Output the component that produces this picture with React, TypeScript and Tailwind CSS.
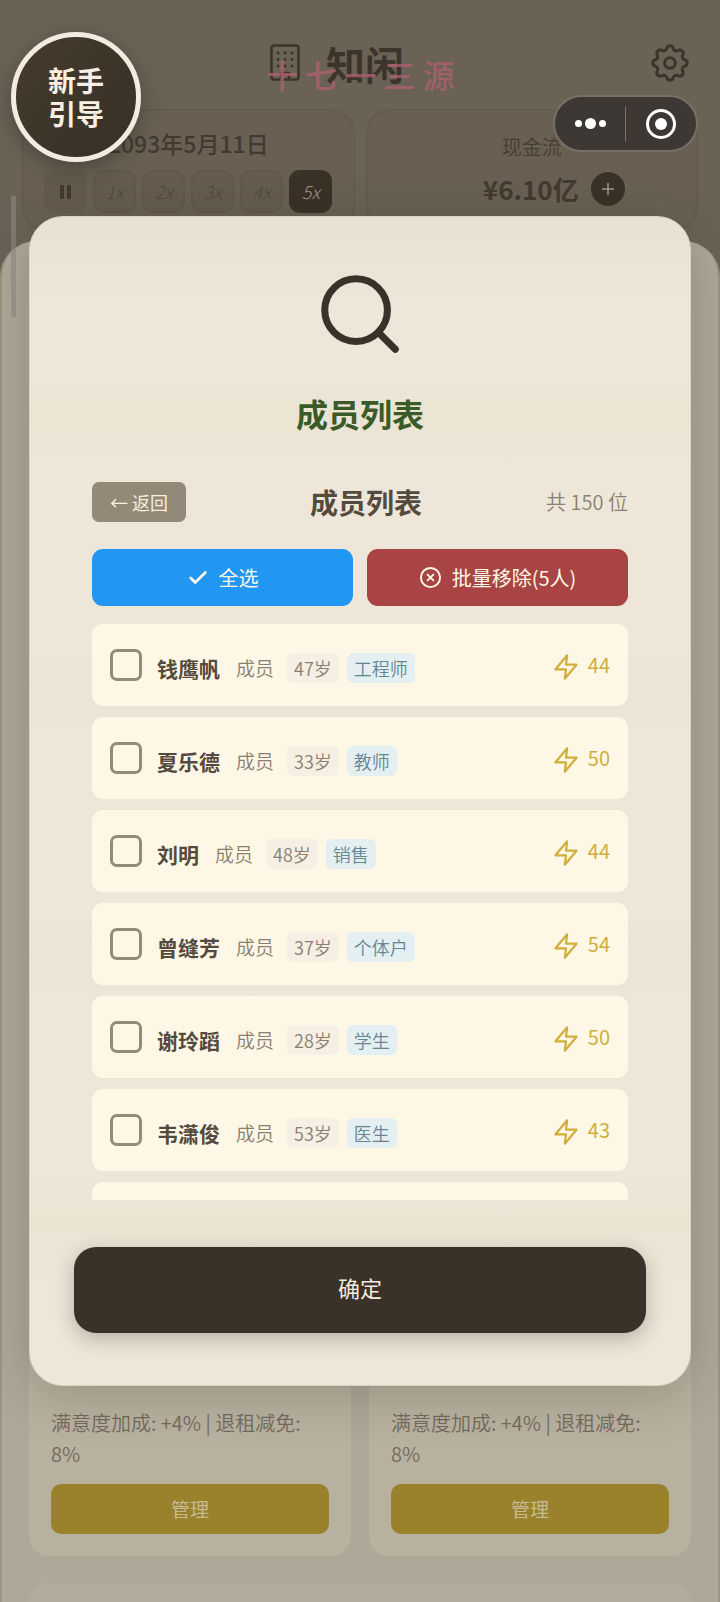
import { Check, CircleX, Search } from "lucide-react";

const members = [
  { name: "钱鹰帆", age: 47, job: "工程师", energy: 44 },
  { name: "夏乐德", age: 33, job: "教师", energy: 50 },
  { name: "刘明", age: 48, job: "销售", energy: 44 },
  { name: "曾缝芳", age: 37, job: "个体户", energy: 54 },
  { name: "谢玲蹈", age: 28, job: "学生", energy: 50 },
  { name: "韦潇俊", age: 53, job: "医生", energy: 43 },
];

const speeds = ["1x", "2x", "3x", "4x", "5x"];

function BuildingIcon() {
  return (
    <svg viewBox="0 0 30 38" className="w-[30px] h-[38px]" fill="none" stroke="currentColor" strokeWidth="2.6">
      <rect x="1.5" y="1.5" width="27" height="34" rx="2.5" />
      <path d="M8 9h.1M15 9h.1M22 9h.1M8 15.500h.1M15 15.500h.1M22 15.500h.1M8 22h.1M15 22h.1M22 22h.1" strokeWidth="2.8" strokeLinecap="round" />
      <path d="M11 35v-6h8v6" />
    </svg>
  );
}

function GearIcon() {
  return (
    <svg viewBox="2 2 20 20" className="size-[38px]" fill="none" stroke="currentColor" strokeWidth="1.600" strokeLinejoin="round">
      <circle cx="12" cy="12" r="2.800" />
      <path d="M10.300 4.300c.4-1.800 3-1.800 3.400 0a1.700 1.700 0 0 0 2.600 1.100c1.500-.9 3.300.9 2.400 2.400a1.700 1.700 0 0 0 1 2.500c1.800.4 1.800 3 0 3.400a1.700 1.700 0 0 0-1 2.600c.9 1.500-.9 3.300-2.400 2.400a1.700 1.700 0 0 0-2.600 1c-.4 1.800-3 1.800-3.400 0a1.700 1.700 0 0 0-2.600-1c-1.500.9-3.300-.9-2.400-2.400a1.700 1.700 0 0 0-1-2.600c-1.800-.4-1.800-3 0-3.400a1.700 1.700 0 0 0 1-2.500c-.9-1.500.9-3.300 2.400-2.400 1 .6 2.300.1 2.600-1.100z" />
    </svg>
  );
}

function ZapIcon() {
  return (
    <svg viewBox="0 0 24 24" className="size-7" fill="none" stroke="currentColor" strokeWidth="1.900" strokeLinejoin="round" strokeLinecap="round">
      <path d="M13 2 3 14h9l-1 8 10-12h-9z" />
    </svg>
  );
}

function Header() {
  return (
    <header>
      <div className="relative h-[109px] pt-[17px] pl-[270px] pr-[31px] flex items-center justify-between text-[#3c342a]">
        <div className="flex items-center gap-[26px]">
          <BuildingIcon />
          <h1 className="text-[39px] leading-[48px] font-bold">知闲</h1>
        </div>
        <button type="button" aria-label="设置">
          <GearIcon />
        </button>
        <p className="absolute left-[266px] top-[50px] text-[32px] leading-[48px] font-medium text-[#b0606d]/80">十 七 一 三 源</p>
      </div>
      <div className="grid grid-cols-2 gap-[11px] px-[22px]">
        <section className="h-[122px] rounded-[24px] border-2 border-[#635b4e] bg-[#696053] flex flex-col items-center">
          <p className="mt-[16px] text-[23px] leading-[32px] font-medium text-[#423a2f]">2093年5月11日</p>
          <div className="mt-[11px] flex gap-[6px]">
            <button type="button" aria-label="暂停" className="size-[43px] rounded-[11px] bg-[#645b4e] flex items-center justify-center gap-[3px]">
              <span className="w-1 h-[14px] bg-[#423a2f]" />
              <span className="w-1 h-[14px] bg-[#423a2f]" />
            </button>
            {speeds.map((speed) => (
              <button
                key={speed}
                type="button"
                className={
                  speed === "5x"
                    ? "size-[43px] rounded-[11px] bg-[#3a3127] text-[18px] italic font-light text-[#a1988a]"
                    : "size-[43px] rounded-[11px] border-2 border-[#61594b] bg-[#655c4f] text-[18px] italic font-light text-[#50483c]"
                }
              >
                {speed}
              </button>
            ))}
          </div>
        </section>
        <section className="h-[122px] rounded-[24px] border-2 border-[#635b4e] bg-[#696053] flex flex-col items-center">
          <p className="mt-[21px] text-[20px] leading-[30px] font-[350] text-[#453d32]">现金流</p>
          <div className="mt-[8px] ml-[44px] flex items-center gap-[12px]">
            <span className="text-[26px] leading-[38px] font-bold text-[#423a2f]">¥6.10亿</span>
            <button type="button" aria-label="增加现金" className="size-[34px] rounded-full bg-[#3a3127] text-[#a1988a] flex items-center justify-center">
              <svg viewBox="0 0 14 14" className="size-[14px]" stroke="currentColor" strokeWidth="1.500">
                <path d="M7 1v12M1 7h12" />
              </svg>
            </button>
          </div>
        </section>
      </div>
    </header>
  );
}

function PropertyCard() {
  return (
    <section className="h-[420px] rounded-[20px] bg-[#b9b1a0] px-[22px] pb-[22px] flex flex-col justify-end">
      <p className="text-[20px] leading-[31px] font-[350] text-[#736a5c]">满意度加成: +4% | 退租减免: 8%</p>
      <button type="button" className="mt-[15px] h-[50px] rounded-[10px] bg-[#9a822d] text-[19px] text-[#c7bb93]">
        管理
      </button>
    </section>
  );
}

function MemberRow({ member }: { member: (typeof members)[number] }) {
  return (
    <li className="h-[82px] shrink-0 rounded-[11px] bg-[#fff7e6] px-[18px] flex items-center">
      <label className="flex items-center">
        <input
          type="checkbox"
          className="appearance-none size-8 mr-[15px] rounded-[7px] border-[3px] border-[#948a78] checked:bg-[#948a78]"
        />
        <span className="mt-[5px] flex items-center">
          <span className="text-[21px] leading-[30px] font-bold text-[#544b3e]">{member.name}</span>
          <span className="ml-[16px] text-[19px] leading-[30px] font-[350] text-[#8a8070]">成员</span>
          <span className="ml-[13px] rounded-[6px] bg-[#f5efe4] px-[7px] text-[18px] leading-[30px] font-[350] text-[#8a8070]">{member.age}岁</span>
          <span className="ml-2 rounded-[6px] bg-[#e4eff2] px-[7px] text-[18px] leading-[30px] font-[350] text-[#668592]">{member.job}</span>
        </span>
      </label>
      <span className="ml-auto flex items-center gap-2 text-[20px] leading-[30px] text-[#cfae3b]">
        <span className="mt-[4px]">
          <ZapIcon />
        </span>
        {member.energy}
      </span>
    </li>
  );
}

function MemberDialog() {
  return (
    <div
      role="dialog"
      aria-label="成员列表"
      className="w-full rounded-[34px] border border-[#dbd2c0] bg-[linear-gradient(#e8e0d3,#ede6d9_8%,#ede6d9_14%,#ebe4d2_17%,#ede6d9_21%,#ede6d9_37%,#ebe3d4_40%,#ede6d9_44%,#ede6d9_60%,#ebe3d4_63%,#ede6d9_67%,#ede6d9_82%,#ebe3d2_86%,#ede6d9_91%)] px-[44px] pt-[50px] pb-[52px] shadow-[0_10px_50px_rgba(40,32,22,0.22)]"
    >
      <Search className="mx-auto size-[94px] text-[#3a3129]" strokeWidth={1.8} />
      <h2 className="mt-[28px] text-center text-[32px] leading-[48px] font-bold text-[#3c5a28]">成员列表</h2>

      <div className="px-[18px]">
        <div className="mt-[45px] flex items-center justify-between">
          <button type="button" className="w-[94px] h-10 rounded-[7px] bg-[#938978] text-[18px] text-[#f6efdf]">
            ← 返回
          </button>
          <h3 className="text-[28px] leading-[40px] font-bold text-[#544b3e]">成员列表</h3>
          <p className="text-[20px] leading-[30px] font-[350] text-[#8a8070]">共 150 位</p>
        </div>

        <div className="mt-[27px] grid grid-cols-2 gap-[14px]">
          <button type="button" className="h-[57px] rounded-[11px] bg-[#2196f3] text-[20px] text-[#fff7e6] flex items-center justify-center gap-[10px]">
            <Check className="size-[22px]" strokeWidth={3} />
            全选
          </button>
          <button type="button" className="h-[57px] rounded-[11px] bg-[#a84444] text-[20px] text-[#fff7e6] flex items-center justify-center gap-[10px]">
            <CircleX className="size-[23px]" />
            批量移除(5人)
          </button>
        </div>

        <ul className="mt-[18px] h-[576px] overflow-hidden flex flex-col gap-[11px]">
          {members.map((member) => (
            <MemberRow key={member.name} member={member} />
          ))}
          <li className="h-[82px] shrink-0 rounded-[11px] bg-[#fff7e6]" />
        </ul>
      </div>

      <button
        type="button"
        className="mt-[47px] w-full h-[86px] pb-[6px] rounded-[22px] bg-[#3a3129] text-[22px] text-[#f3ebdd] shadow-[0_6px_20px_rgba(58,49,41,0.3)]"
      >
        确定
      </button>
    </div>
  );
}

function Capsule() {
  return (
    <div className="absolute right-[22px] top-[95px] w-[145px] h-[57px] rounded-full border-2 border-[#777067] bg-[#3d3834] flex items-center text-white">
      <button type="button" aria-label="更多" className="flex-1 flex items-center justify-center gap-[3px]">
        <span className="size-[7px] rounded-full bg-white" />
        <span className="size-[11px] rounded-full bg-white" />
        <span className="size-[7px] rounded-full bg-white" />
      </button>
      <span className="w-px h-9 bg-[#777067]" />
      <button type="button" aria-label="关闭" className="flex-1 flex items-center justify-center">
        <svg viewBox="0 0 30 30" className="size-[30px]">
          <circle cx="15" cy="15" r="13.500" fill="none" stroke="currentColor" strokeWidth="3" />
          <circle cx="15" cy="15" r="6" fill="currentColor" />
        </svg>
      </button>
    </div>
  );
}

export default function App() {
  return (
    <div className="relative h-screen overflow-hidden bg-[#6b6256] flex flex-col font-['Noto_Sans_CJK_SC','Noto_Sans',sans-serif]">
      <Header />
      <main className="mt-[10px] flex-1 rounded-t-[36px] border-x-2 border-[#9d9485] bg-[#afa798] px-[27px] flex flex-col justify-end">
        <div className="grid grid-cols-2 gap-[18px]">
          <PropertyCard />
          <PropertyCard />
        </div>
        <div className="mt-[27px] h-[19px] rounded-t-[20px] bg-[#b3ac9e]" />
      </main>

      <div className="absolute left-[11px] top-[196px] w-[5px] h-[121px] bg-[#8d8b87]/60" />

      <div className="absolute inset-0 px-[29px] flex items-center">
        <MemberDialog />
      </div>

      <Capsule />
      <button
        type="button"
        className="absolute left-[11px] top-[32px] size-[130px] rounded-full border-[5px] border-[#f3ebdf] bg-[linear-gradient(135deg,#453b2e,#383026)] text-[28px] leading-[33px] font-bold text-[#f6efe2] shadow-[0_6px_20px_rgba(30,30,22,0.4)]"
      >
        新手
        <br />
        引导
      </button>
    </div>
  );
}
